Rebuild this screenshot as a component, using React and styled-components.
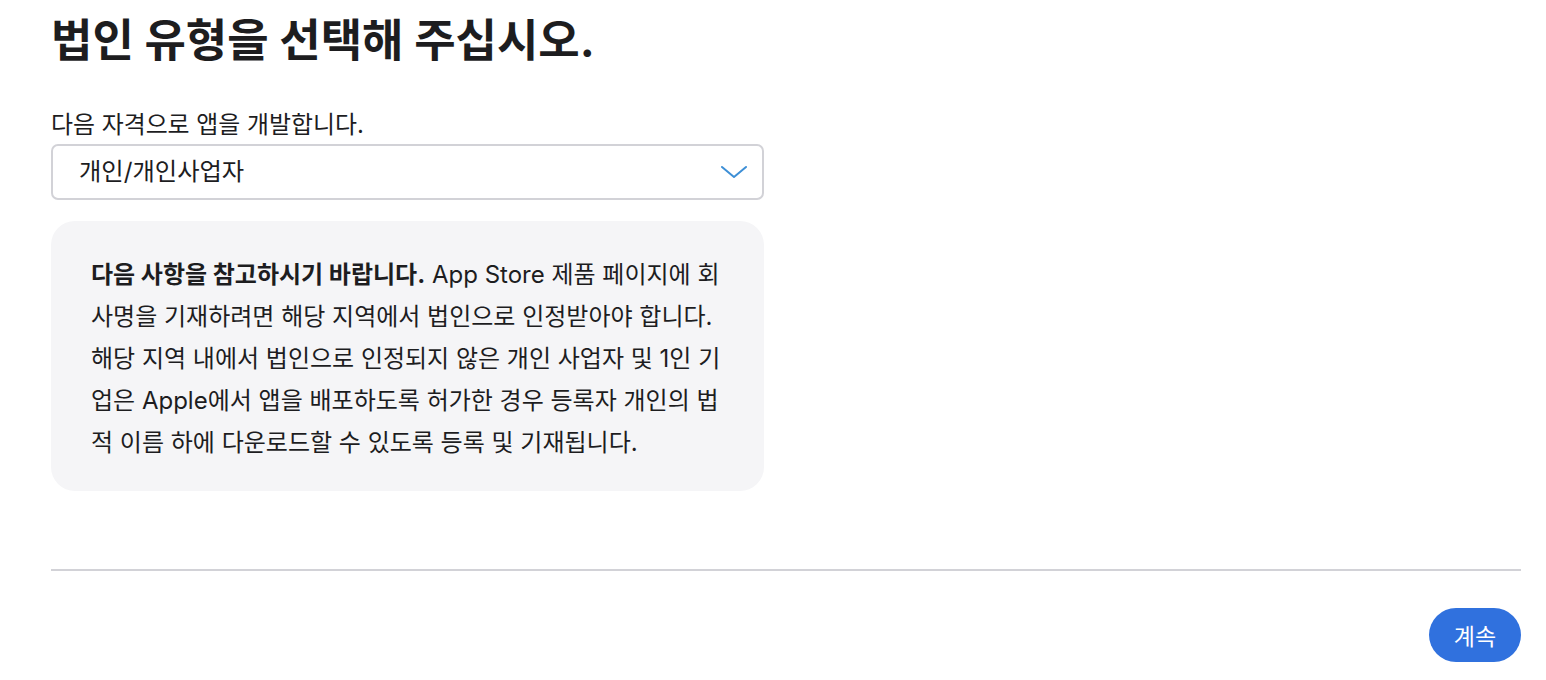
import React from "react";
import styled, { createGlobalStyle } from "styled-components";

const Global = createGlobalStyle`
  html, body { margin: 0; padding: 0; background: #fff; }
  body {
    font-family: "Inter", "Noto Sans CJK KR", "Noto Sans", sans-serif;
    color: #1d1d1f;
  }
`;

const Page = styled.div`
  padding: 13px 25px 18px 51px;
  display: flex;
  flex-direction: column;
`;

const Title = styled.h1`
  margin: 0;
  font-size: 45px;
  line-height: 56px;
  font-weight: 700;
  color: #1d1d1f;
`;

const Form = styled.div`
  width: 713px;
  margin-top: 42px;
  display: flex;
  flex-direction: column;
`;

const Label = styled.label`
  font-size: 23.9px;
  line-height: 28px;
  color: #1d1d1f;
`;

const Select = styled.div`
  margin-top: 5px;
  height: 56px;
  box-sizing: border-box;
  border: 2px solid #d2d2d7;
  border-radius: 7px;
  display: flex;
  align-items: center;
  justify-content: space-between;
  padding: 0 15px 5px 26px;
  font-size: 24.3px;
  color: #1d1d1f;
`;

const Chevron = styled.svg`
  width: 26px;
  height: 16px;
  margin-top: 5px;
`;

const Notice = styled.div`
  margin-top: 21px;
  background: #f5f5f7;
  border-radius: 24px;
  padding: 33px 40px 27px 40px;
  font-size: 24px;
  line-height: 42px;
  color: #1d1d1f;
  white-space: nowrap;
`;

const Strong = styled.strong`
  font-weight: 700;
`;

const Divider = styled.hr`
  margin: 78px 0 0 0;
  border: 0;
  height: 2px;
  background: #d2d2d7;
`;

const Footer = styled.div`
  display: flex;
  justify-content: flex-end;
  margin-top: 37px;
`;

const Button = styled.button`
  height: 54px;
  width: 92px;
  border: 0;
  border-radius: 27px;
  background: #3071de;
  color: #fff;
  font-family: inherit;
  font-size: 23px;
  cursor: pointer;
`;

export default function App() {
  return (
    <>
      <Global />
      <Page>
        <Title>법인 유형을 선택해 주십시오.</Title>
        <Form>
          <Label>다음 자격으로 앱을 개발합니다.</Label>
          <Select>
            <span>개인/개인사업자</span>
            <Chevron viewBox="0 0 26 16" fill="none">
              <path d="M1 3 L13 13 L25 3" stroke="#3d8fd6" strokeWidth="2" strokeLinecap="round" strokeLinejoin="round" />
            </Chevron>
          </Select>
          <Notice>
            <Strong>다음 사항을 참고하시기 바랍니다.</Strong> App Store 제품 페이지에 회<br />
            사명을 기재하려면 해당 지역에서 법인으로 인정받아야 합니다.<br />
            해당 지역 내에서 법인으로 인정되지 않은 개인 사업자 및 1인 기<br />
            업은 Apple에서 앱을 배포하도록 허가한 경우 등록자 개인의 법<br />
            적 이름 하에 다운로드할 수 있도록 등록 및 기재됩니다.
          </Notice>
        </Form>
        <Divider />
        <Footer>
          <Button>계속</Button>
        </Footer>
      </Page>
    </>
  );
}
